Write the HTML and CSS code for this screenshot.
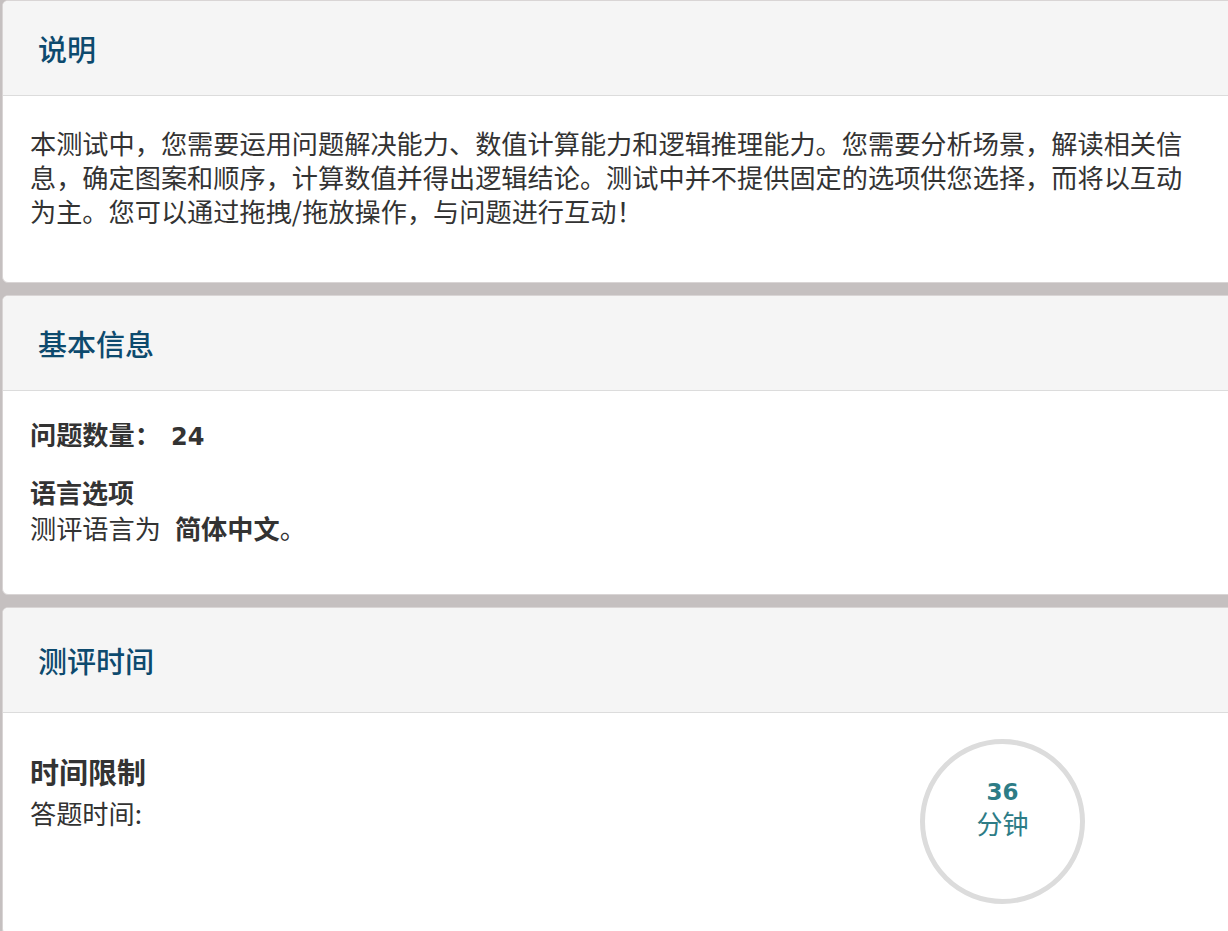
FILE: index.html
```html
<!DOCTYPE html>
<html lang="zh-CN">
<head>
<meta charset="UTF-8">
<title>测评说明</title>
<link rel="stylesheet" href="styles.css">
</head>
<body>
	<div class="page">

		<!-- 说明 -->
		<section class="card">
			<div class="card-head"><h2>说明</h2></div>
			<div class="card-body intro">
				<p>本测试中，您需要运用问题解决能力、数值计算能力和逻辑推理能力。您需要分析场景，解读相关信息，确定图案和顺序，计算数值并得出逻辑结论。测试中并不提供固定的选项供您选择，而将以互动为主。您可以通过拖拽/拖放操作，与问题进行互动！</p>
			</div>
		</section>

		<!-- 基本信息 -->
		<section class="card">
			<div class="card-head"><h2>基本信息</h2></div>
			<div class="card-body info">
				<p class="count"><b>问题数量：</b><span class="num">24</span></p>
				<h3>语言选项</h3>
				<p>测评语言为<b class="lang">简体中文</b>。</p>
			</div>
		</section>

		<!-- 测评时间 -->
		<section class="card">
			<div class="card-head tall"><h2>测评时间</h2></div>
			<div class="card-body time">
				<div class="time-text">
					<h3>时间限制</h3>
					<p>答题时间:</p>
				</div>
				<div class="timer">
					<span class="timer-num">36</span>
					<span class="timer-unit">分钟</span>
				</div>
			</div>
		</section>

	</div>
</body>
</html>
```

FILE: styles.css
```css
html {
  overflow: hidden;
}

body {
  margin: 0;
  background-color: #c5c0c0;
  font-family: "Noto Sans CJK SC", "Noto Sans", sans-serif;
  color: #333;
}

.page {
  width: 1240px;
  padding-left: 2px;
}

.card {
  background-color: #fff;
  border: 1px solid #d9d5d5;
  border-radius: 6px;
  margin-bottom: 12px;
  overflow: hidden;
}

.card-head {
  height: 94px;
  display: flex;
  align-items: center;
  padding-left: 35px;
  background-color: #f5f5f5;
  border-bottom: 1px solid #dcdcdc;
}

.card-head.tall {
  height: 104px;
}

.card-head h2 {
  margin: 0;
  font-size: 29px;
  font-weight: 500;
  color: #0d4a6e;
}

.card-body {
  padding: 0 46px 0 27px;
}

.card-body p {
  margin: 0;
  font-size: 26.2px;
  line-height: 34px;
}

.intro {
  padding-top: 30px;
  padding-bottom: 54px;
}

.info {
  padding-top: 25px;
  padding-bottom: 48px;
}

.info p,
.info h3 {
  line-height: 36px;
}

.info .count {
  margin-bottom: 19px;
}

.num {
  font-family: "DejaVu Sans", sans-serif;
  font-weight: bold;
  font-size: 24px;
  margin-left: 10px;
}

.card-body h3 {
  margin: 0;
  font-size: 26px;
  font-weight: bold;
}

.lang {
  margin-left: 14px;
}

.time {
  display: flex;
  align-items: flex-start;
  padding-top: 26px;
  padding-bottom: 30px;
}

.time-text {
  flex: 1;
  padding-top: 13px;
}

.time-text h3 {
  font-size: 29px;
  line-height: 38px;
  margin-bottom: 6px;
}

.timer {
  width: 155px;
  height: 119px;
  padding-top: 36px;
  border: 5px solid #dcdcdc;
  border-radius: 50%;
  margin-right: 110px;
  display: flex;
  flex-direction: column;
  align-items: center;
  color: #2d7c86;
}

.timer-num {
  font-family: "DejaVu Sans", sans-serif;
  font-weight: bold;
  font-size: 23px;
  line-height: 24px;
}

.timer-unit {
  font-size: 26px;
  line-height: 38px;
}
```
